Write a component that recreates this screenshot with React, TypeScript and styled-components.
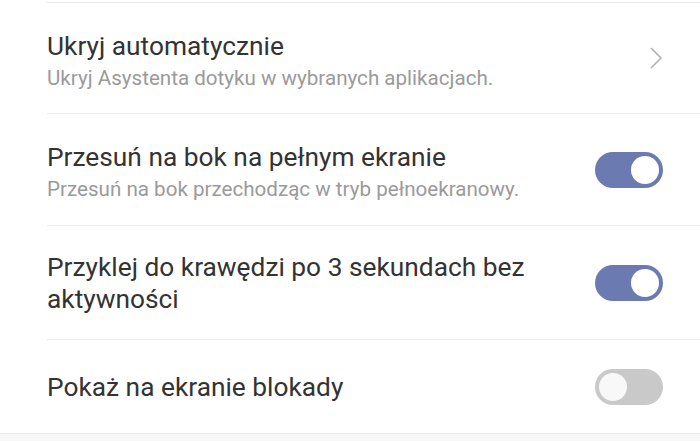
import React from "react";
import styled, { createGlobalStyle } from "styled-components";

const Global = createGlobalStyle`
  html, body { margin: 0; padding: 0; background: #ffffff; }
  body { font-family: Roboto, "Noto Sans", sans-serif; -webkit-font-smoothing: antialiased; }
`;

const Page = styled.div`
  width: 700px;
  height: 441px;
  overflow: hidden;
  display: flex;
  flex-direction: column;
  background: #ffffff;
`;

const TopSpacer = styled.div`
  height: 2px;
`;

const List = styled.div`
  display: flex;
  flex-direction: column;
`;

const Row = styled.div<{ $h: number }>`
  height: ${(p) => p.$h}px;
  margin-left: 47px;
  border-top: 1px solid #ebebeb;
  display: flex;
  align-items: center;
  justify-content: space-between;
  padding-right: 37px;
  box-sizing: border-box;
`;

const Texts = styled.div<{ $withSub?: boolean }>`
  display: flex;
  flex-direction: column;
  max-width: 510px;
  padding-top: ${(p) => (p.$withSub ? 4 : 0)}px;
`;

const Title = styled.div`
  font-family: Roboto, sans-serif;
  font-size: 26.3px;
  line-height: 32px;
  color: #333333;
`;

const Sub = styled.div`
  font-family: Roboto, sans-serif;
  font-size: 20.6px;
  line-height: 26px;
  color: #9a9a9a;
  margin-top: 3px;
`;

const Track = styled.div<{ $on: boolean }>`
  width: 68px;
  height: 36px;
  border-radius: 18px;
  background: ${(p) => (p.$on ? "#6b7ab0" : "#c9c9c9")};
  display: flex;
  align-items: center;
  justify-content: ${(p) => (p.$on ? "flex-end" : "flex-start")};
  padding: 0 4px;
  box-sizing: border-box;
  flex-shrink: 0;
`;

const Knob = styled.div<{ $on: boolean }>`
  width: 28px;
  height: 28px;
  border-radius: 50%;
  background: ${(p) => (p.$on ? "#ffffff" : "#f8f8f8")};
`;

const Chevron = styled.svg`
  width: 14px;
  height: 24px;
  flex-shrink: 0;
`;

const Footer = styled.div`
  flex: 1;
  background: #f7f7f7;
  border-top: 1px solid #ebebeb;
`;

function Toggle({ on }: { on: boolean }) {
  return (
    <Track $on={on}>
      <Knob $on={on} />
    </Track>
  );
}

export default function App() {
  return (
    <Page>
      <Global />
      <TopSpacer />
      <List>
        <Row $h={111}>
          <Texts $withSub>
            <Title>Ukryj automatycznie</Title>
            <Sub>Ukryj Asystenta dotyku w wybranych aplikacjach.</Sub>
          </Texts>
          <Chevron viewBox="0 0 14 24">
            <polyline points="2,2 12,12 2,22" fill="none" stroke="#b0b0b0" strokeWidth="1.6" />
          </Chevron>
        </Row>
        <Row $h={112}>
          <Texts $withSub>
            <Title>Przesuń na bok na pełnym ekranie</Title>
            <Sub>Przesuń na bok przechodząc w tryb pełnoekranowy.</Sub>
          </Texts>
          <Toggle on />
        </Row>
        <Row $h={114}>
          <Texts>
            <Title>Przyklej do krawędzi po 3 sekundach bez aktywności</Title>
          </Texts>
          <Toggle on />
        </Row>
        <Row $h={94}>
          <Texts>
            <Title>Pokaż na ekranie blokady</Title>
          </Texts>
          <Toggle on={false} />
        </Row>
      </List>
      <Footer />
    </Page>
  );
}
